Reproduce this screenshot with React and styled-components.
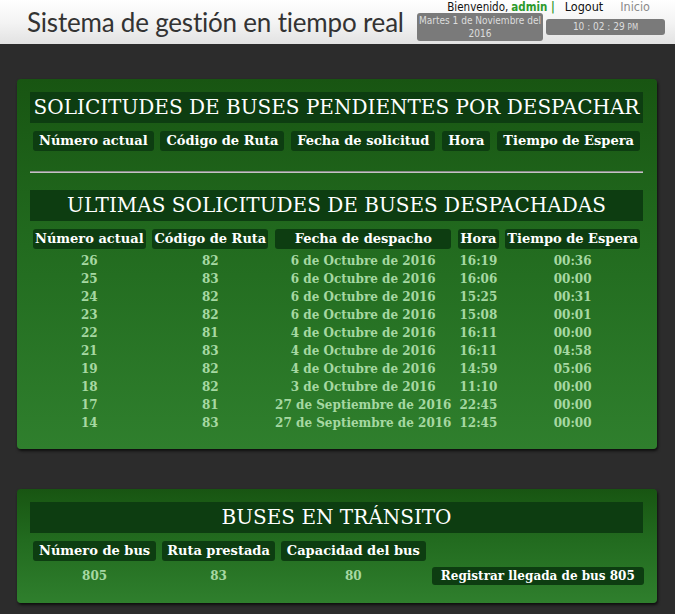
import React from 'react';
import styled, { createGlobalStyle } from 'styled-components';

const GlobalStyle = createGlobalStyle`
  html, body {
    margin: 0;
    padding: 0;
    background: #2c2c2c;
  }
  * { box-sizing: border-box; }
`;

const TopBar = styled.header`
  height: 44px;
  display: flex;
  align-items: flex-start;
  justify-content: space-between;
  padding: 0 10px 0 27px;
  background: linear-gradient(to bottom, #ffffff 0%, #f4f4f4 50%, #e2e2e2 100%);
`;

const AppTitle = styled.h1`
  margin: 6px 0 0 0;
  font-family: Lato, "Open Sans", sans-serif;
  font-weight: 400;
  font-size: 26px;
  letter-spacing: -0.2px;
  line-height: 32px;
  color: #333;
  white-space: nowrap;
  flex-shrink: 1;
  min-width: 0;
`;

const RightCol = styled.div`
  display: flex;
  flex-direction: column;
  align-items: flex-end;
  flex-shrink: 0;
`;

const LinksRow = styled.div`
  display: flex;
  align-items: center;
  height: 13px;
  font-family: "DejaVu Sans Condensed", "Liberation Sans", sans-serif;
  font-stretch: condensed;
  font-size: 11.5px;
  color: #111;
  padding-right: 15px;
`;

const Admin = styled.span`
  color: #2c9a2c;
  font-weight: bold;
  margin-left: 3px;
`;

const NavLink = styled.span`
  margin-left: ${p => p.$gap}px;
  font-size: 12.5px;
  color: ${p => (p.$muted ? '#8a8a8a' : '#111')};
`;

const DateRow = styled.div`
  display: flex;
  align-items: center;
  gap: 3px;
`;

const InfoBox = styled.div`
  background: #7a7a7a;
  border-radius: 3px;
  color: #ddd;
  font-family: "DejaVu Sans Condensed", "Liberation Sans", sans-serif;
  font-stretch: condensed;
  font-size: 10px;
  line-height: 13px;
  text-align: center;
  width: ${p => p.$w}px;
  padding: 1px 2px;
  small { font-size: 8px; }
`;

const Main = styled.main`
  padding: 35px 18px 10px 17px;
  display: flex;
  flex-direction: column;
  gap: 40px;
`;

const Panel = styled.section`
  background: linear-gradient(to bottom, #185512 0%, #226b1f 45%, #2f7f2d 100%);
  border-radius: 4px;
  box-shadow: 1px 2px 3px rgba(0, 0, 0, 0.7);
  padding: 13px 14px ${p => p.$bottom}px 13px;
`;

const SectionTitle = styled.h2`
  margin: 0;
  background: #0d3d11;
  color: #fff;
  font-family: "DejaVu Serif", serif;
  font-weight: 400;
  font-size: 20px;
  line-height: 31px;
  text-align: center;
  white-space: nowrap;
`;

const Grid = styled.div`
  display: grid;
  grid-template-columns: repeat(${p => p.$cols}, auto);
  justify-content: ${p => p.$justify || 'space-between'};
  align-items: center;
  column-gap: ${p => p.$gap || 5}px;
  padding: 8px 3px 0 3px;
  font-family: "DejaVu Serif", serif;
  font-weight: bold;
  white-space: nowrap;
`;

const HeadCell = styled.div`
  align-self: start;
  background: ${p => (p.$empty ? 'transparent' : '#0d3d11')};
  border-radius: 3px;
  color: #fff;
  font-size: 13px;
  line-height: 20px;
  height: 20px;
  padding: 0 ${p => p.$pad}px;
  text-align: center;
  margin-bottom: 3px;
`;

const DataCell = styled.div`
  color: #a6d8a2;
  font-size: 12px;
  line-height: 18px;
  padding: ${p => p.$vpad || 0}px 0;
  text-align: ${p => p.$align || 'center'};
`;

const Divider = styled.hr`
  margin: 17px 0 17px 0;
  border: 0;
  border-top: 1px solid #8a8a8a;
  border-bottom: 1px solid #c4c4c4;
`;

const ActionButton = styled.button`
  display: block;
  background: #0d3d11;
  border: 0;
  border-radius: 3px;
  color: #fff;
  font-family: "DejaVu Serif", serif;
  font-weight: bold;
  font-size: 12px;
  line-height: 18px;
  height: 18px;
  padding: 0 9px;
  margin: 0;
  cursor: pointer;
`;

const pendingCols = ['Número actual', 'Código de Ruta', 'Fecha de solicitud', 'Hora', 'Tiempo de Espera'];
const doneCols = ['Número actual', 'Código de Ruta', 'Fecha de despacho', 'Hora', 'Tiempo de Espera'];

const dispatched = [
  ['26', '82', '6 de Octubre de 2016', '16:19', '00:36'],
  ['25', '83', '6 de Octubre de 2016', '16:06', '00:00'],
  ['24', '82', '6 de Octubre de 2016', '15:25', '00:31'],
  ['23', '82', '6 de Octubre de 2016', '15:08', '00:01'],
  ['22', '81', '4 de Octubre de 2016', '16:11', '00:00'],
  ['21', '83', '4 de Octubre de 2016', '16:11', '04:58'],
  ['19', '82', '4 de Octubre de 2016', '14:59', '05:06'],
  ['18', '82', '3 de Octubre de 2016', '11:10', '00:00'],
  ['17', '81', '27 de Septiembre de 2016', '22:45', '00:00'],
  ['14', '83', '27 de Septiembre de 2016', '12:45', '00:00'],
];

const App = () => {
  return (
    <>
      <GlobalStyle />
      <TopBar>
        <AppTitle>Sistema de gestión en tiempo real</AppTitle>
        <RightCol>
          <LinksRow>
            Bienvenido, <Admin>admin |</Admin>
            <NavLink $gap={10}>Logout</NavLink>
            <NavLink $gap={17} $muted>Inicio</NavLink>
          </LinksRow>
          <DateRow>
            <InfoBox $w={126}>Martes 1 de Noviembre del 2016</InfoBox>
            <InfoBox $w={119}>10 : 02 : 29 <small>PM</small></InfoBox>
          </DateRow>
        </RightCol>
      </TopBar>

      <Main>
        <Panel $bottom={17}>
          <SectionTitle>SOLICITUDES DE BUSES PENDIENTES POR DESPACHAR</SectionTitle>
          <Grid $cols={5}>
            {pendingCols.map(c => (
              <HeadCell key={c} $pad={6}>{c}</HeadCell>
            ))}
          </Grid>
          <Divider />
          <SectionTitle>ULTIMAS SOLICITUDES DE BUSES DESPACHADAS</SectionTitle>
          <Grid $cols={5}>
            {doneCols.map(c => (
              <HeadCell key={c} $pad={2}>{c}</HeadCell>
            ))}
            {dispatched.map(row =>
              row.map((v, i) => <DataCell key={row[0] + '-' + i}>{v}</DataCell>)
            )}
          </Grid>
        </Panel>

        <Panel $bottom={15}>
          <SectionTitle>BUSES EN TRÁNSITO</SectionTitle>
          <Grid $cols={4} $justify="start" $gap={6}>
            <HeadCell $pad={6}>Número de bus</HeadCell>
            <HeadCell $pad={5}>Ruta prestada</HeadCell>
            <HeadCell $pad={6}>Capacidad del bus</HeadCell>
            <HeadCell $empty $pad={0} />
            <DataCell $vpad={3}>805</DataCell>
            <DataCell $vpad={3}>83</DataCell>
            <DataCell $vpad={3}>80</DataCell>
            <DataCell $vpad={3} $align="right">
              <ActionButton>Registrar llegada de bus 805</ActionButton>
            </DataCell>
          </Grid>
        </Panel>
      </Main>
    </>
  );
};

export default App;
